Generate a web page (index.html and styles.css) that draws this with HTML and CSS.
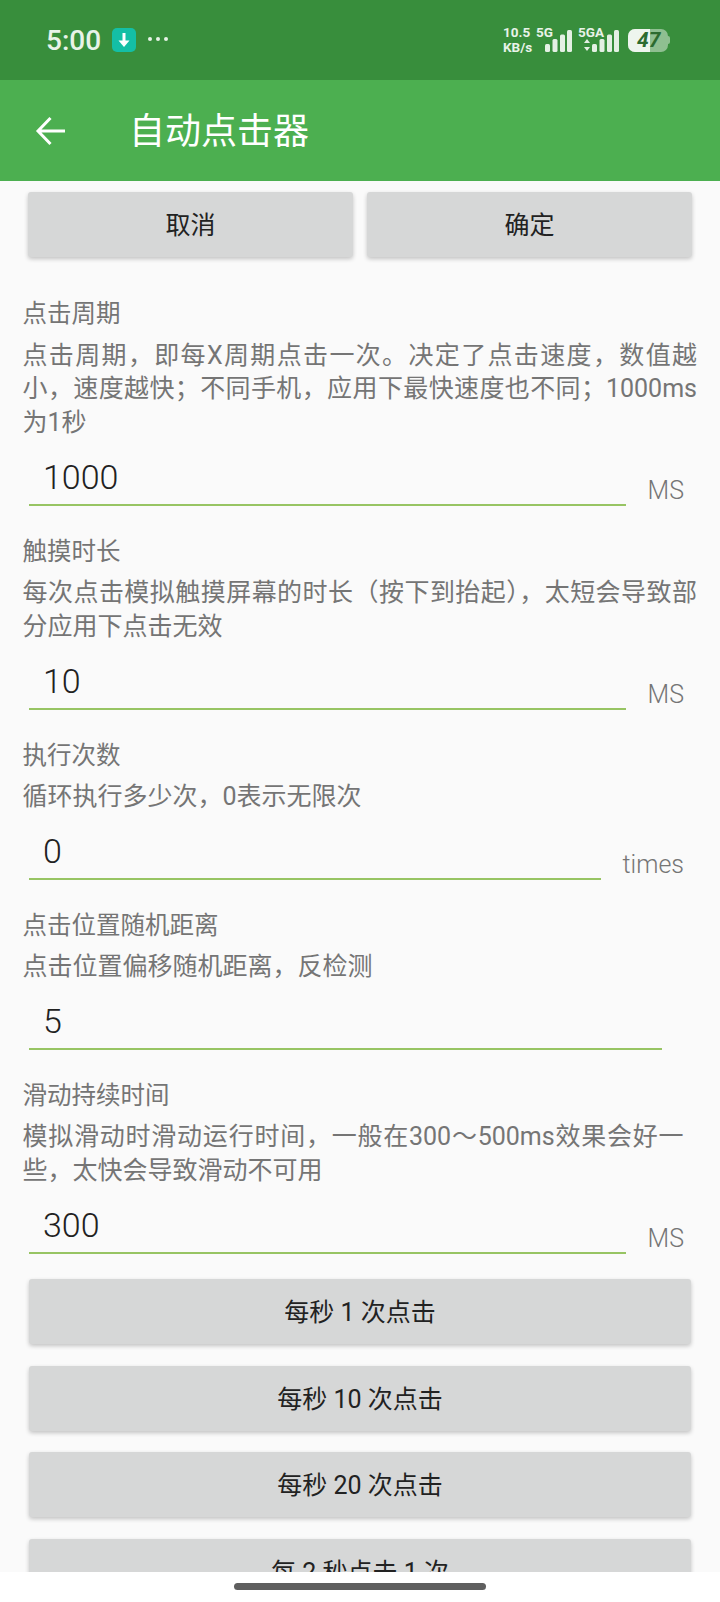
FILE: index.html
```html
<!DOCTYPE html>
<html lang="zh-CN">
<head>
    <meta charset="UTF-8">
    <meta name="viewport" content="width=device-width, initial-scale=1.0">
    <link rel="stylesheet" href="styles.css">
    <title>自动点击器</title>
</head>
<body>
    <div class="phone">
        <div class="status-bar">
            <span class="clock">5:00</span>
            <svg class="app-badge" width="24" height="24" viewBox="0 0 24 24">
                <rect width="24" height="24" rx="5" fill="#14bfa5"/>
                <path d="M12 5v9" stroke="#fff" stroke-width="3"/>
                <path d="M6.5 12.5h11L12 19z" fill="#fff"/>
            </svg>
            <span class="dots">
                <i></i><i></i><i></i>
            </span>
            <div class="status-right">
                <span class="speed">10.5<br>KB/s</span>
                <div class="signal">
                    <span class="net">5G</span>
                    <svg width="27" height="22" viewBox="0 0 27 22">
                        <rect x="0" y="14" width="5" height="8" rx="1.5" fill="#e4f0e4"/>
                        <rect x="7.5" y="9" width="5" height="13" rx="1.5" fill="#e4f0e4"/>
                        <rect x="15" y="4.500" width="5" height="17.500" rx="1.5" fill="#e4f0e4"/>
                        <rect x="22" y="0" width="5" height="22" rx="1.5" fill="#e4f0e4"/>
                    </svg>
                </div>
                <div class="signal signal-second">
                    <span class="net">5GA</span>
                    <svg width="35" height="22" viewBox="0 0 35 22">
                        <path d="M3 9l3 4H0zM3 21l3-4H0z" fill="#e4f0e4"/>
                        <rect x="8" y="14" width="5" height="8" rx="1.500" fill="#e4f0e4"/>
                        <rect x="15.500" y="9" width="5" height="13" rx="1.500" fill="#e4f0e4"/>
                        <rect x="23" y="4.500" width="5" height="17.500" rx="1.500" fill="#e4f0e4"/>
                        <rect x="30" y="0" width="5" height="22" rx="1.500" fill="#e4f0e4"/>
                    </svg>
                </div>
                <div class="battery">
                    <div class="battery-body">
                        <div class="battery-fill"></div>
                        <span class="battery-num">47</span>
                    </div>
                    <div class="battery-tip"></div>
                </div>
            </div>
        </div>

        <div class="toolbar">
            <svg class="back" width="32" height="32" viewBox="0 0 32 32">
                <path d="M30 16H4M15.500 3L3 16 15.500 29" fill="none" stroke="#fff" stroke-width="3"/>
            </svg>
            <h1 class="title">自动点击器</h1>
        </div>

        <div class="content">
            <div class="button-row">
                <button class="btn" type="button">取消</button>
                <button class="btn" type="button">确定</button>
            </div>

            <div class="setting setting-first">
                <div class="setting-name">点击周期</div>
                <p class="setting-desc">
                    <span class="line-full">点击周期，即每X周期点击一次。决定了点击速度，数值越</span>
                    <span class="line-full">小，速度越快；不同手机，应用下最快速度也不同；1000ms</span>
                    为1秒
                </p>
                <div class="field">
                    <input class="field-input" type="text" value="1000">
                    <span class="field-unit">MS</span>
                </div>
            </div>

            <div class="setting">
                <div class="setting-name">触摸时长</div>
                <p class="setting-desc">
                    <span class="line-full">每次点击模拟触摸屏幕的时长（按下到抬起），太短会导致部</span>
                    分应用下点击无效
                </p>
                <div class="field">
                    <input class="field-input" type="text" value="10">
                    <span class="field-unit">MS</span>
                </div>
            </div>

            <div class="setting">
                <div class="setting-name">执行次数</div>
                <p class="setting-desc">循环执行多少次，0表示无限次</p>
                <div class="field">
                    <input class="field-input" type="text" value="0">
                    <span class="field-unit">times</span>
                </div>
            </div>

            <div class="setting">
                <div class="setting-name">点击位置随机距离</div>
                <p class="setting-desc">点击位置偏移随机距离，反检测</p>
                <div class="field field-plain">
                    <input class="field-input" type="text" value="5">
                </div>
            </div>

            <div class="setting">
                <div class="setting-name">滑动持续时间</div>
                <p class="setting-desc">
                    <span class="line-full line-short">模拟滑动时滑动运行时间，一般在300～500ms效果会好一</span>
                    些，太快会导致滑动不可用
                </p>
                <div class="field">
                    <input class="field-input" type="text" value="300">
                    <span class="field-unit">MS</span>
                </div>
            </div>

            <div class="presets">
                <button class="btn" type="button">每秒 1 次点击</button>
                <button class="btn" type="button">每秒 10 次点击</button>
                <button class="btn" type="button">每秒 20 次点击</button>
                <button class="btn" type="button">每 2 秒点击 1 次</button>
            </div>
        </div>

        <div class="nav-bar">
            <div class="nav-handle"></div>
        </div>
    </div>
</body>
</html>
```

FILE: styles.css
```css
* {
    box-sizing: border-box;
}

body {
    margin: 0;
    font-family: Roboto, "Noto Sans CJK SC", sans-serif;
    background-color: #fafafa;
}

.phone {
    width: 720px;
    height: 1602px;
    display: flex;
    flex-direction: column;
    overflow: hidden;
}

/* status bar */
.status-bar {
    height: 80px;
    flex: none;
    display: flex;
    align-items: center;
    padding: 0 0 0 46px;
    background-color: #388e3c;
    color: #e8f3e8;
}

.clock {
    font-size: 28px;
    font-weight: 500;
}

.app-badge {
    margin-left: 11px;
}

.dots {
    display: flex;
    gap: 4px;
    margin-left: 12px;
    margin-bottom: 3px;
}

.dots i {
    width: 4px;
    height: 4px;
    border-radius: 50%;
    background-color: #e8f3e8;
}

.status-right {
    display: flex;
    align-items: center;
    margin-left: auto;
    margin-right: 50px;
}

.speed {
    width: 33px;
    font-size: 13.500px;
    font-weight: 700;
    line-height: 15px;
}

.signal {
    position: relative;
    display: flex;
    align-items: flex-end;
    justify-content: flex-end;
    width: 36px;
    height: 24px;
}

.signal-second {
    width: 41px;
    margin-left: 6px;
}

.net {
    position: absolute;
    left: 0;
    top: -3px;
    font-size: 13.500px;
    font-weight: 700;
    line-height: 15px;
}

.battery {
    display: flex;
    align-items: center;
    margin-left: 9px;
}

.battery-body {
    position: relative;
    width: 40px;
    height: 23px;
    border-radius: 7px;
    overflow: hidden;
    background-color: #8fbf91;
}

.battery-fill {
    width: 55%;
    height: 100%;
    background-color: #eef5ee;
}

.battery-num {
    position: absolute;
    left: 9px;
    top: 0;
    font-size: 21px;
    font-weight: 700;
    font-style: italic;
    line-height: 23px;
    color: #2c6b30;
}

.battery-tip {
    width: 2px;
    height: 8px;
    border-radius: 0 2px 2px 0;
    background-color: #8fbf91;
}

/* toolbar */
.toolbar {
    height: 101px;
    flex: none;
    display: flex;
    align-items: center;
    padding-left: 35px;
    background-color: #4caf50;
}

.title {
    margin: 0 0 0 62px;
    padding-bottom: 5px;
    font-size: 36px;
    font-weight: 400;
    color: #fff;
}

/* scrolling part */
.content {
    flex: 1;
    min-height: 0;
    overflow: hidden;
    padding-top: 11px;
}

.button-row {
    display: flex;
    gap: 14px;
    padding: 0 28px;
}

.btn {
    flex: 1;
    height: 65px;
    padding: 0 0 3px;
    border: none;
    border-radius: 3px;
    background-color: #d6d7d7;
    color: #222;
    font-family: inherit;
    font-size: 25px;
    box-shadow: 0 2px 4px rgba(0, 0, 0, 0.22);
}

.setting {
    padding: 0 22.500px;
    margin-top: 29px;
}

.setting-first {
    margin-top: 40px;
}

.setting-name {
    font-size: 24.500px;
    line-height: 34px;
    color: #757575;
}

.setting-desc {
    margin: 7.500px 0 0;
    font-size: 25px;
    line-height: 33.700px;
    color: #757575;
}

/* lines of the description that run the full width */
.line-full {
    display: block;
    width: 674.500px;
    white-space: nowrap;
    text-align: justify;
    text-align-last: justify;
}

.line-short {
    width: 661px;
}

.field {
    display: flex;
    align-items: flex-end;
    margin: 12px 13.500px 0 6.500px;
}

.field-plain {
    margin-right: 35.500px;
}

.field-input {
    flex: 1;
    min-width: 0;
    height: 54px;
    padding: 0 14px 1px;
    border: none;
    border-bottom: 2px solid #97c463;
    border-radius: 0;
    background: none;
    font-family: inherit;
    font-size: 34px;
    font-weight: 300;
    color: #212121;
    outline: none;
}

.field-unit {
    margin-left: 22px;
    font-size: 25px;
    font-weight: 300;
    line-height: 31px;
    color: #757575;
}

.presets {
    display: flex;
    flex-direction: column;
    gap: 21.500px;
    padding: 25.500px 29px 0;
}

.presets .btn {
    flex: none;
}

/* bottom bar */
.nav-bar {
    height: 30px;
    flex: none;
    display: flex;
    justify-content: center;
    padding-top: 11px;
    background-color: #fff;
}

.nav-handle {
    width: 252px;
    height: 7px;
    border-radius: 4px;
    background-color: #5f5f5f;
}
```
